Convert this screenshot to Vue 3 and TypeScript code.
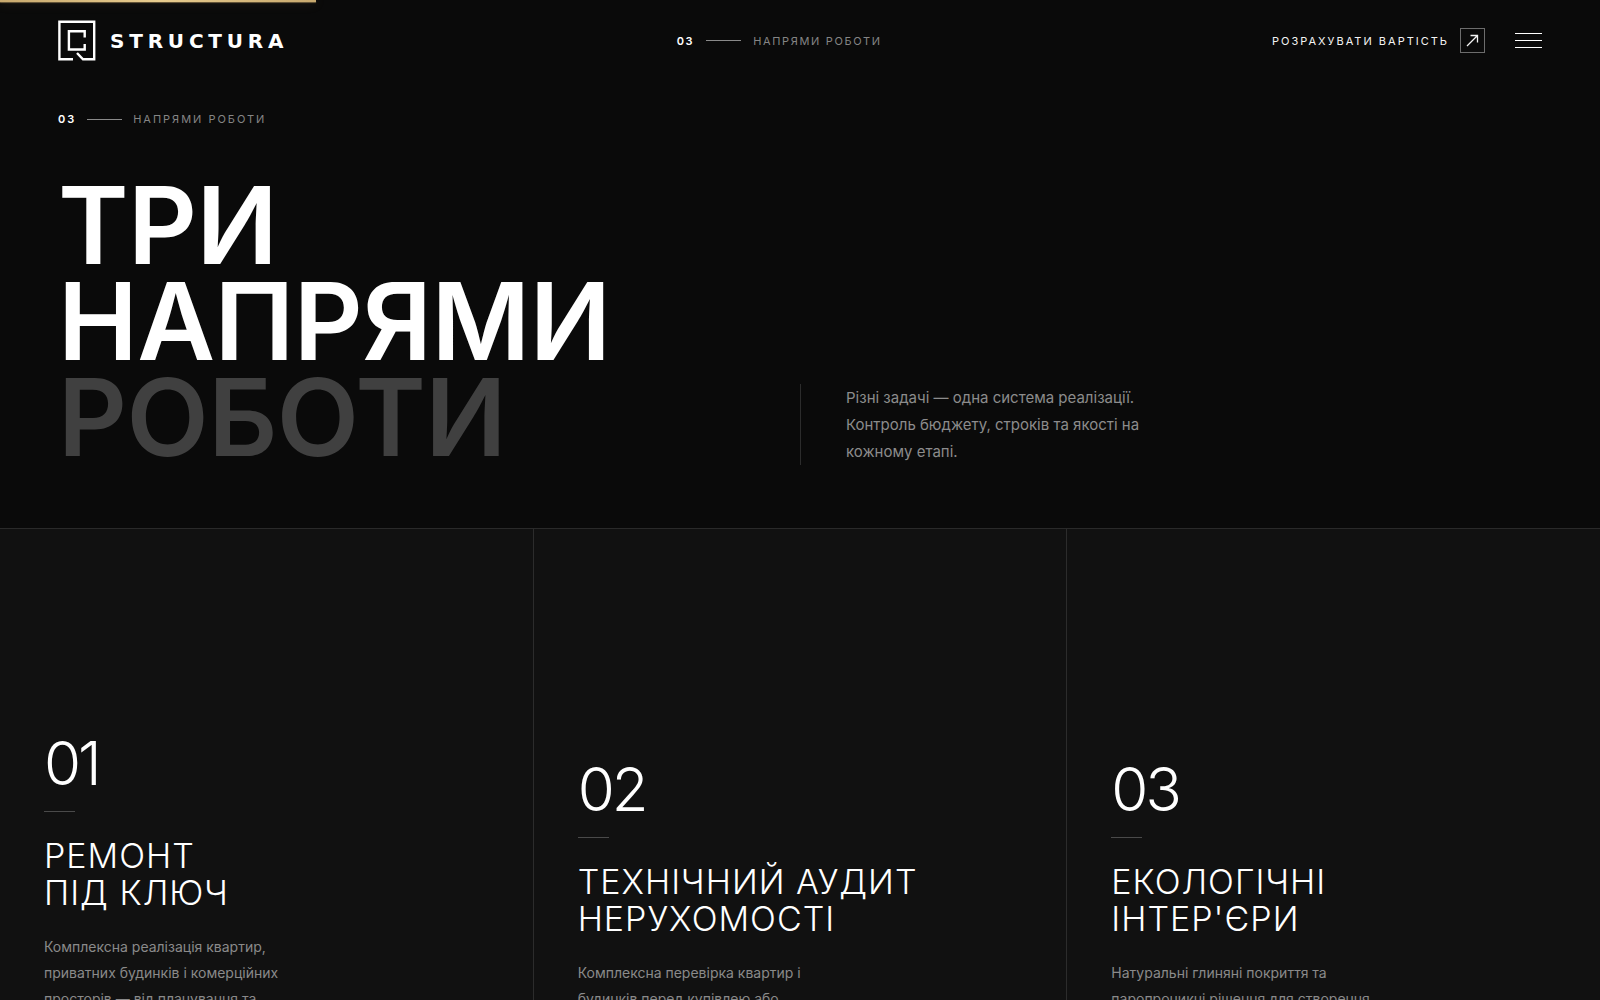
<script setup lang="ts">
interface Direction {
  num: string
  title: string[]
  text: string[]
}

const progress = 19.75

const directions: Direction[] = [
  {
    num: '01',
    title: ['РЕМОНТ', 'ПІД КЛЮЧ'],
    text: ['Комплексна реалізація квартир,', 'приватних будинків і комерційних', 'просторів — від планування та'],
  },
  {
    num: '02',
    title: ['ТЕХНІЧНИЙ АУДИТ', 'НЕРУХОМОСТІ'],
    text: ['Комплексна перевірка квартир і', 'будинків перед купівлею або'],
  },
  {
    num: '03',
    title: ['ЕКОЛОГІЧНІ', "ІНТЕР'ЄРИ"],
    text: ['Натуральні глиняні покриття та', 'паропроникні рішення для створення'],
  },
]
</script>

<template>
  <div class="page">
    <div class="progress" :style="{ width: progress + '%' }"></div>

    <header class="header">
      <a class="logo" href="#">
        <svg class="logo-mark" width="38" height="41" viewBox="0 0 38 41" fill="none" stroke="currentColor" stroke-width="2.4">
          <path d="M15 39.3H1.4V1.7H36.2V39.3H25L19 33" />
          <path d="M26.7 17.5V11.2H10.9V29.5H26.7V24" />
        </svg>
        <span class="logo-name">STRUCTURA</span>
      </a>

      <div class="label">
        <span class="label-num">03</span>
        <span class="label-line"></span>
        <span class="label-text">НАПРЯМИ РОБОТИ</span>
      </div>

      <div class="actions">
        <a class="cta" href="#">
          <span>РОЗРАХУВАТИ ВАРТІСТЬ</span>
          <span class="cta-box">
            <svg width="13" height="13" viewBox="0 0 13 13" fill="none" stroke="currentColor" stroke-width="1.3">
              <path d="M1 12L11.5 1.5M4.5 1.5H11.5V8.5" />
            </svg>
          </span>
        </a>
        <button class="burger" type="button" aria-label="Меню">
          <span></span><span></span><span></span>
        </button>
      </div>
    </header>

    <main>
      <section class="hero">
        <div class="label label-wide">
          <span class="label-num">03</span>
          <span class="label-line"></span>
          <span class="label-text">НАПРЯМИ РОБОТИ</span>
        </div>
        <div class="hero-row">
          <h1>ТРИ<br />НАПРЯМИ<br /><span class="muted">РОБОТИ</span></h1>
          <p class="lead">
            Різні задачі — одна система реалізації.<br />Контроль бюджету, строків та якості на<br />кожному етапі.
          </p>
        </div>
      </section>

      <section class="cards">
        <article v-for="d in directions" :key="d.num" class="card">
          <div class="card-num">{{ d.num }}</div>
          <div class="card-line"></div>
          <h2><span v-for="t in d.title" :key="t">{{ t }}</span></h2>
          <p><span v-for="t in d.text" :key="t">{{ t }}</span></p>
        </article>
      </section>
    </main>
  </div>
</template>

<style>
body {
  background: #0a0a0a;
}
</style>

<style scoped>
.page {
  position: relative;
  height: 100vh;
  overflow: hidden;
  background: #0a0a0a;
  color: #fff;
  font-family: Inter, "Liberation Sans", sans-serif;
}

.progress {
  position: absolute;
  top: 0;
  left: 0;
  height: 2px;
  background: linear-gradient(90deg, #c8a96e, #e8cc8e 50%, #c8a96e);
  box-shadow: 0 1px 1px rgba(200, 169, 110, 0.5), 0 0 12px rgba(200, 169, 110, 0.3);
}

.header {
  display: flex;
  align-items: center;
  justify-content: space-between;
  height: 81px;
  padding: 0 58px;
}

.logo {
  display: flex;
  align-items: center;
  gap: 14px;
  color: #fff;
  text-decoration: none;
}

.logo-mark {
  display: block;
}

.logo-name {
  margin-right: -2px;
  font: 700 20px/24px "DejaVu Sans", sans-serif;
  letter-spacing: 0.24em;
}

.label {
  display: flex;
  align-items: center;
  gap: 12px;
  font-size: 11px;
  line-height: 16px;
  letter-spacing: 0.15em;
}

.label-wide {
  gap: 11px;
  letter-spacing: 0.18em;
}

.label-num {
  font-weight: 600;
}

.label-line {
  width: 35px;
  height: 1px;
  background: #8a8a8a;
}

.label-text {
  color: #858585;
}

.actions {
  display: flex;
  align-items: center;
  gap: 30px;
}

.cta {
  display: flex;
  align-items: center;
  gap: 11px;
  color: #f4f4f4;
  font-size: 11px;
  line-height: 16px;
  letter-spacing: 2px;
  text-decoration: none;
}

.cta-box {
  display: flex;
  align-items: center;
  justify-content: center;
  width: 23px;
  height: 23px;
  border: 1px solid #6c6c6c;
}

.burger {
  display: flex;
  flex-direction: column;
  gap: 6px;
  width: 27px;
  padding: 0;
  border: 0;
  background: none;
}

.burger span {
  height: 1px;
  background: #fff;
}

.hero {
  padding: 30px 58px 63px;
}

.hero-row {
  display: grid;
  grid-template-columns: 1fr 1fr;
  align-items: end;
  margin-top: 50px;
}

h1 {
  margin: 0;
  font-size: 107px;
  font-weight: 600;
  line-height: 96px;
  letter-spacing: -0.005em;
}

.muted {
  color: #404040;
}

.lead {
  margin: 0;
  padding-left: 45px;
  border-left: 1px solid #2c2c2c;
  color: #8c8c8c;
  font-size: 15px;
  line-height: 27px;
}

.cards {
  display: grid;
  grid-template-columns: repeat(3, 1fr);
  gap: 1px;
  border-top: 1px solid #2a2a2a;
  background: #2c2c2c;
}

.card {
  display: flex;
  flex-direction: column;
  justify-content: flex-end;
  min-height: 483px;
  padding: 0 44px;
  background: #111;
}

.card-num {
  font-size: 60px;
  font-weight: 300;
  line-height: 60px;
  letter-spacing: -3px;
}

.card-line {
  width: 31px;
  height: 1px;
  margin: 18px 0 25px;
  background: #4a4a4a;
}

h2 {
  margin: 0 0 23px;
  font-size: 34px;
  font-weight: 300;
  line-height: 37px;
  letter-spacing: 1px;
}

h2 span,
.card p span {
  display: block;
}

.card p {
  margin: 0;
  color: #8a8a8a;
  font-size: 14px;
  line-height: 26px;
}
</style>
